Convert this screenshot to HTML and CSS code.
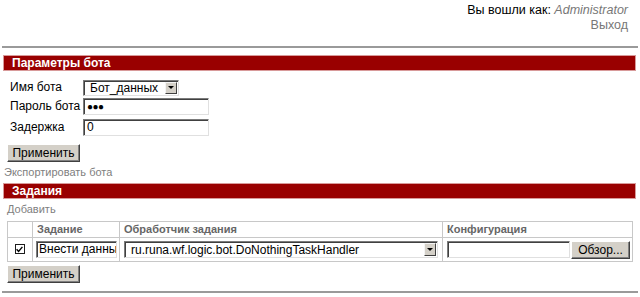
FILE: index.html
```html
<!DOCTYPE html>
<html lang="ru">
<head>
<meta charset="utf-8">
<title>Бот</title>
<link rel="stylesheet" href="styles.css">
</head>
<body>
<div class="login">
  <div class="who">Вы вошли как: <i class="user">Administrator</i></div>
  <div class="logout">Выход</div>
</div>
<div class="rule"></div>
<div class="bar">Параметры бота</div>
<div class="form">
  <div class="frow first">
    <span class="lbl">Имя бота</span>
    <span class="sel sel-bot"><span class="seltext">Бот_данных</span><span class="arrow"><span class="tri"></span></span></span>
  </div>
  <div class="frow">
    <span class="lbl">Пароль бота</span>
    <span class="inp inp-wide"><span class="dots">●●●</span></span>
  </div>
  <div class="frow">
    <span class="lbl">Задержка</span>
    <span class="inp inp-wide">0</span>
  </div>
  <div class="btnrow"><span class="btn">Применить</span></div>
</div>
<div class="link export">Экспортировать бота</div>
<div class="bar bar2">Задания</div>
<div class="link add">Добавить</div>
<table class="tasks">
  <colgroup>
    <col class="w-chk">
    <col class="w-task">
    <col class="w-handler">
    <col>
  </colgroup>
  <tr class="head">
    <th></th>
    <th>Задание</th>
    <th>Обработчик задания</th>
    <th>Конфигурация</th>
  </tr>
  <tr class="body">
    <td class="c-chk"><span class="chk"><svg width="7" height="7" viewBox="0 0 7 7"><path d="M0.6 3.2 L2.6 5.4 L6.4 0.9" fill="none" stroke="#000" stroke-width="1.4"/></svg></span></td>
    <td><span class="inp inp-task">Внести данные</span></td>
    <td><span class="sel sel-handler"><span class="seltext">ru.runa.wf.logic.bot.DoNothingTaskHandler</span><span class="arrow"><span class="tri"></span></span></span></td>
    <td><span class="confwrap"><span class="inp inp-file"></span><span class="btn btn-browse">Обзор...</span></span></td>
  </tr>
</table>
<div class="btnrow2"><span class="btn">Применить</span></div>
<div class="rule rule-bottom"></div>
</body>
</html>
```
FILE: styles.css
```css
html, body {
  margin: 0;
  padding: 0;
  background: #fff;
}
body {
  font-family: "Liberation Sans", Arial, sans-serif;
  font-size: 12px;
  color: #000;
  width: 640px;
}
.login {
  display: flex;
  flex-direction: column;
  align-items: flex-end;
  padding: 3px 12px 0 0;
  font-size: 12.5px;
  line-height: 15px;
  height: 37px;
}
.who {
  white-space: nowrap;
}
.user {
  color: #777;
}
.logout {
  color: #777;
}
.rule {
  height: 0;
  border-top: 2px solid #9a9a9a;
  margin: 6px 2px 0 2px;
}
.bar {
  margin: 7px 4px 0 3px;
  background: #990000;
  border: 1px solid #d89a9a;
  color: #fff;
  font-weight: bold;
  font-size: 12px;
  line-height: 14px;
  height: 14px;
  padding-left: 8px;
}
.form {
  padding: 8px 0 0 10px;
}
.frow {
  display: flex;
  align-items: center;
  height: 17px;
  margin-bottom: 4px;
}
.frow.first {
  margin-bottom: 2px;
}
.lbl {
  width: 73px;
  white-space: nowrap;
  line-height: 17px;
}
.sel {
  position: relative;
  display: inline-flex;
  align-items: center;
  box-sizing: border-box;
  height: 17px;
  border: 1px solid;
  border-color: #7b7b7b #e0e0e0 #e0e0e0 #7b7b7b;
  box-shadow: inset 1px 1px 0 #404040;
  background: #fff;
  font-size: 12px;
  padding-left: 6px;
  white-space: nowrap;
}
.sel-bot {
  width: 96px;
  height: 16px;
}
.arrow {
  position: absolute;
  right: 1px;
  top: 1px;
  bottom: 1px;
  width: 12px;
  box-sizing: border-box;
  background: #d4d0c8;
  border: 1px solid;
  border-color: #f4f4f4 #404040 #404040 #f4f4f4;
  display: flex;
  align-items: center;
  justify-content: center;
}
.tri {
  width: 0;
  height: 0;
  border-left: 3px solid transparent;
  border-right: 3px solid transparent;
  border-top: 3px solid #000;
}
.inp {
  display: inline-block;
  box-sizing: border-box;
  height: 17px;
  border: 1px solid;
  border-color: #7b7b7b #e0e0e0 #e0e0e0 #7b7b7b;
  box-shadow: inset 1px 1px 0 #404040;
  background: #fff;
  font-size: 12px;
  line-height: 15px;
  padding-left: 3px;
  white-space: nowrap;
  overflow: hidden;
}
.inp-wide {
  width: 126px;
}
.dots {
  font-size: 10px;
  letter-spacing: -0.5px;
  vertical-align: top;
  line-height: 15px;
}
.btnrow {
  margin-left: -3px;
  padding-top: 4px;
  height: 18px;
}
.btn {
  display: inline-block;
  box-sizing: border-box;
  height: 18px;
  width: 73px;
  text-align: center;
  background: #d4d0c8;
  border: 1px solid;
  border-color: #fff #404040 #404040 #fff;
  box-shadow: inset -1px -1px 0 #808080;
  font-size: 12px;
  line-height: 16px;
  color: #000;
}
.link {
  color: #808080;
  font-size: 11px;
  line-height: 13px;
}
.export {
  padding: 4px 0 0 4px;
}
.bar2 {
  margin-top: 4px;
}
.add {
  padding: 4px 0 0 7px;
}
.tasks {
  margin: 5px 0 0 7px;
  border-collapse: collapse;
  width: 626px;
  table-layout: fixed;
}
.w-chk { width: 25px; }
.w-task { width: 87px; }
.w-handler { width: 323px; }
.tasks th, .tasks td {
  border: 1px solid #c8c8c8;
  padding: 0;
}
.tasks th {
  text-align: left;
  color: #666;
  font-size: 11px;
  font-weight: bold;
  height: 15px;
  line-height: 15px;
  text-indent: 4px;
}
.tasks td {
  height: 23px;
  vertical-align: middle;
}
.tasks td.c-chk {
  text-align: center;
}
.chk {
  display: inline-flex;
  align-items: center;
  justify-content: center;
  box-sizing: border-box;
  width: 10px;
  height: 10px;
  border: 1px solid #1c1c1c;
  background: #fff;
  vertical-align: middle;
  margin: -2px 0 0 -1px;
}
.inp-task {
  width: 81px;
  margin-left: 3px;
  display: block;
  font-size: 12px;
  padding-left: 2px;
}
.sel-handler {
  display: flex;
  width: 314px;
  margin-left: 4px;
}
.confwrap {
  display: flex;
  align-items: center;
  margin-left: 4px;
}
.inp-file {
  width: 123px;
}
.btn-browse {
  margin-left: 1px;
  width: 59px;
}
.btnrow2 {
  margin: 3px 0 0 7px;
  height: 18px;
}
.rule-bottom {
  margin-top: 8px;
}
```
